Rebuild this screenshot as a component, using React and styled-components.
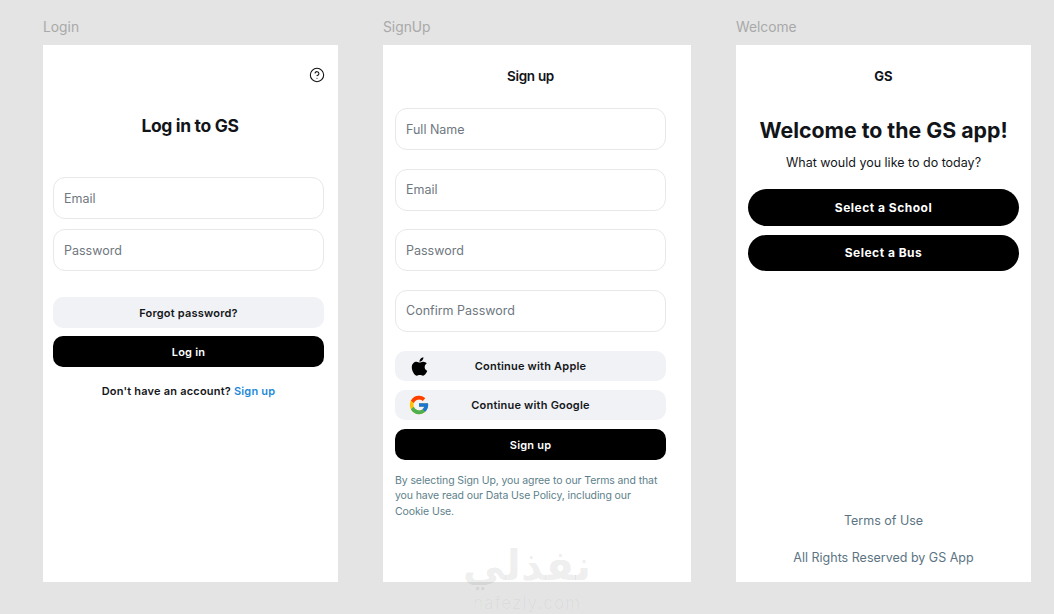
import React from "react";
import styled, { createGlobalStyle } from "styled-components";
import { FaApple } from "react-icons/fa";
import { FcGoogle } from "react-icons/fc";
import { CircleHelp } from "lucide-react";

const GlobalStyle = createGlobalStyle`
  html, body {
    margin: 0;
    padding: 0;
    background: #e4e4e4;
  }
  * {
    box-sizing: border-box;
  }
`;

export default function App() {
  return (
    <Page>
      <GlobalStyle />
      <Column $width={295}>
        <FrameLabel>Login</FrameLabel>
        <LoginPanel>
          <HelpRow>
            <CircleHelp size={16} strokeWidth={1.6} color="#111" />
          </HelpRow>
          <LoginTitle>Log in to GS</LoginTitle>
          <FieldStack $gap={10}>
            <Field>Email</Field>
            <Field>Password</Field>
          </FieldStack>
          <ButtonStack>
            <SoftButton>Forgot password?</SoftButton>
            <DarkButton>Log in</DarkButton>
          </ButtonStack>
          <AccountLine>
            Don't have an account? <SignUpLink>Sign up</SignUpLink>
          </AccountLine>
        </LoginPanel>
      </Column>

      <Column $width={308}>
        <FrameLabel>SignUp</FrameLabel>
        <SignUpPanel>
          <SmallTitle>Sign up</SmallTitle>
          <FieldStack $gap={18.5}>
            <Field>Full Name</Field>
            <Field>Email</Field>
            <Field>Password</Field>
            <Field>Confirm Password</Field>
          </FieldStack>
          <SocialStack>
            <SocialButton>
              <SocialIcon>
                <FaApple size={21} color="#000" />
              </SocialIcon>
              <span>Continue with Apple</span>
            </SocialButton>
            <SocialButton>
              <SocialIcon>
                <FcGoogle size={22} />
              </SocialIcon>
              <span>Continue with Google</span>
            </SocialButton>
            <DarkButton>Sign up</DarkButton>
          </SocialStack>
          <Legal>
            By selecting Sign Up, you agree to our Terms and that
            <br />
            you have read our Data Use Policy, including our
            <br />
            Cookie Use.
          </Legal>
        </SignUpPanel>
      </Column>

      <Column $width={295}>
        <FrameLabel>Welcome</FrameLabel>
        <WelcomePanel>
          <Brand>GS</Brand>
          <WelcomeTitle>Welcome to the GS app!</WelcomeTitle>
          <WelcomeText>What would you like to do today?</WelcomeText>
          <PillStack>
            <PillButton>Select a School</PillButton>
            <PillButton>Select a Bus</PillButton>
          </PillStack>
          <Footer>
            <FooterLine>Terms of Use</FooterLine>
            <FooterLine>All Rights Reserved by GS App</FooterLine>
          </Footer>
        </WelcomePanel>
      </Column>

      <Watermark>
        <WatermarkName>نفذلي</WatermarkName>
        <WatermarkSite>nafezly.com</WatermarkSite>
      </Watermark>
    </Page>
  );
}

const Page = styled.div`
  position: relative;
  display: flex;
  gap: 45px;
  width: 1054px;
  height: 614px;
  padding: 18px 0 0 43px;
  overflow: hidden;
  background: #e4e4e4;
  font-family: "Inter", "Liberation Sans", sans-serif;
`;

const Column = styled.section`
  display: flex;
  flex-direction: column;
  width: ${(p) => p.$width}px;
`;

const FrameLabel = styled.div`
  height: 18px;
  margin-bottom: 9px;
  font-size: 13.8px;
  line-height: 18px;
  color: #a9a9a9;
`;

const Panel = styled.div`
  display: flex;
  flex-direction: column;
  height: 537px;
  background: #ffffff;
`;

const LoginPanel = styled(Panel)`
  padding: 22px 14px 0 10px;
`;

const SignUpPanel = styled(Panel)`
  padding: 22px 25px 0 12px;
`;

const WelcomePanel = styled(Panel)`
  padding: 22px 12px 0;
  align-items: stretch;
`;

const HelpRow = styled.div`
  display: flex;
  justify-content: flex-end;
  height: 16px;
  margin-right: -1px;
`;

const LoginTitle = styled.h1`
  margin: 31px 0 39px;
  padding-left: 3px;
  font-size: 17.5px;
  line-height: 24px;
  font-weight: 700;
  letter-spacing: -0.35px;
  text-align: center;
  color: #111418;
`;

const SmallTitle = styled.h2`
  margin: 0 0 23px;
  height: 18px;
  font-size: 13.5px;
  line-height: 18px;
  font-weight: 600;
  letter-spacing: -0.3px;
  text-align: center;
  color: #111418;
`;

const FieldStack = styled.div`
  display: flex;
  flex-direction: column;
  gap: ${(p) => p.$gap}px;
`;

const Field = styled.div`
  display: flex;
  align-items: center;
  height: 42px;
  padding: 0 10px;
  border: 1px solid #e6e8ea;
  border-radius: 12px;
  background: #ffffff;
  font-size: 12.5px;
  color: #6f7780;
`;

const ButtonStack = styled.div`
  display: flex;
  flex-direction: column;
  gap: 8px;
  margin-top: 26px;
`;

const SoftButton = styled.div`
  display: flex;
  align-items: center;
  justify-content: center;
  height: 31px;
  border-radius: 10px;
  background: #f1f2f5;
  font-size: 11px;
  font-weight: 600;
  letter-spacing: 0.2px;
  color: #14171a;
`;

const DarkButton = styled.div`
  display: flex;
  align-items: center;
  justify-content: center;
  height: 31px;
  border-radius: 10px;
  background: #000000;
  font-size: 11px;
  font-weight: 600;
  letter-spacing: 0.2px;
  color: #ffffff;
`;

const AccountLine = styled.p`
  margin: 17px 0 0;
  font-size: 11px;
  line-height: 15px;
  font-weight: 600;
  letter-spacing: 0.2px;
  text-align: center;
  color: #14171a;
`;

const SignUpLink = styled.span`
  color: #1f8ad8;
`;

const SocialStack = styled.div`
  display: flex;
  flex-direction: column;
  gap: 9px;
  margin-top: 19.5px;
`;

const SocialButton = styled.div`
  display: grid;
  grid-template-columns: 48px 1fr 48px;
  align-items: center;
  height: 30px;
  border-radius: 10px;
  background: #f1f2f5;
  font-size: 11px;
  font-weight: 600;
  letter-spacing: 0.2px;
  text-align: center;
  color: #14171a;
`;

const SocialIcon = styled.span`
  display: flex;
  align-items: center;
  justify-content: center;
`;

const Legal = styled.p`
  margin: 12.5px 0 0;
  font-size: 10.5px;
  line-height: 15.7px;
  letter-spacing: -0.1px;
  color: #5d7f8a;
`;

const Brand = styled.div`
  height: 19px;
  font-size: 13px;
  line-height: 19px;
  font-weight: 700;
  text-align: center;
  color: #111418;
`;

const WelcomeTitle = styled.h1`
  margin: 30px 0 0;
  font-size: 21.3px;
  line-height: 28px;
  font-weight: 700;
  text-align: center;
  color: #111418;
`;

const WelcomeText = styled.p`
  margin: 10px 0 0;
  font-size: 12.5px;
  line-height: 18px;
  text-align: center;
  color: #14171a;
`;

const PillStack = styled.div`
  display: flex;
  flex-direction: column;
  gap: 9px;
  margin-top: 17px;
`;

const PillButton = styled.div`
  display: flex;
  align-items: center;
  justify-content: center;
  height: 36.5px;
  border-radius: 19px;
  background: #000000;
  font-size: 12px;
  font-weight: 700;
  letter-spacing: 0.5px;
  color: #ffffff;
`;

const Footer = styled.div`
  display: flex;
  flex-direction: column;
  gap: 19px;
  margin-top: auto;
  padding-bottom: 15px;
`;

const FooterLine = styled.div`
  font-size: 12.5px;
  line-height: 18px;
  text-align: center;
  color: #5c7482;
`;

const Watermark = styled.div`
  position: absolute;
  left: 440px;
  top: 538px;
  width: 174px;
  text-align: center;
  pointer-events: none;
  color: rgba(0, 0, 0, 0.07);
`;

const WatermarkName = styled.div`
  font-family: "DejaVu Sans", sans-serif;
  font-size: 42px;
  line-height: 56px;
  font-weight: 700;
`;

const WatermarkSite = styled.div`
  font-size: 17px;
  line-height: 18px;
  letter-spacing: 1px;
  color: rgba(0, 0, 0, 0.035);
`;
